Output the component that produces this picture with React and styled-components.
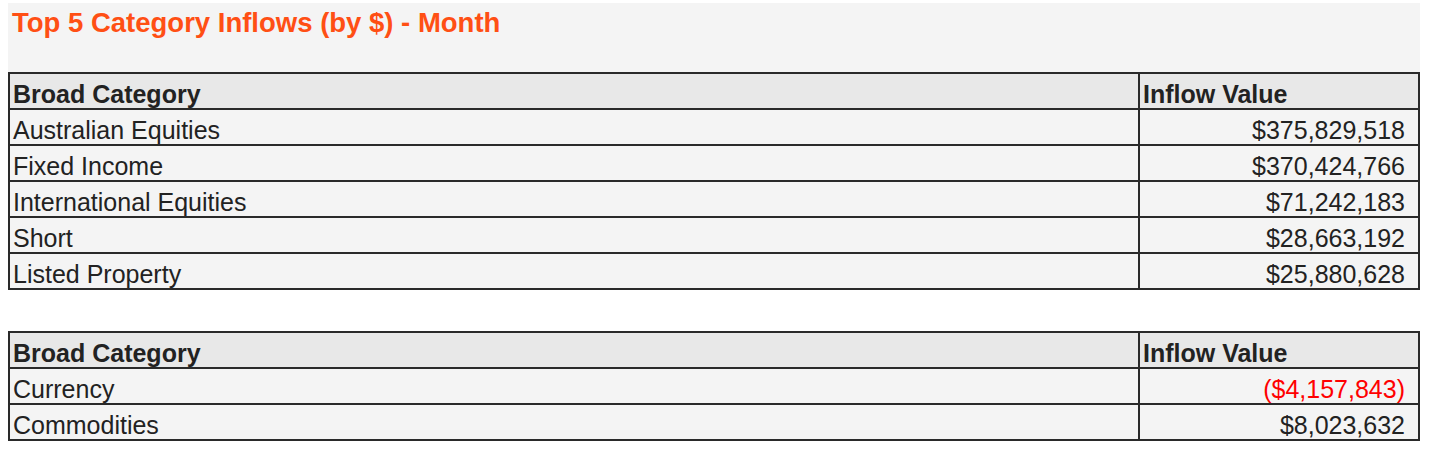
import React from "react";
import styled, { createGlobalStyle } from "styled-components";

const GlobalStyle = createGlobalStyle`
  body {
    margin: 0;
    background: #ffffff;
    font-family: "Liberation Sans", Arial, sans-serif;
  }
`;

const Page = styled.div`
  padding: 3px 26px 0 8px;
  display: flex;
  flex-direction: column;
`;

const TitleBar = styled.div`
  background: #f4f4f4;
  height: 69px;
  padding: 4px 0 0 4px;
  box-sizing: border-box;
`;

const Title = styled.h1`
  margin: 0;
  font-size: 27.5px;
  line-height: 32px;
  font-weight: bold;
  color: #ff4f14;
`;

const Table = styled.div`
  border: 2px solid #2a2a2a;
  background: #f4f4f4;
  margin-top: ${(p) => p.$gap || 0}px;
`;

const Row = styled.div`
  display: grid;
  grid-template-columns: 1128px 1fr;
  height: 34px;
  background: ${(p) => (p.$head ? "#e8e8e8" : "#f4f4f4")};
  & + & {
    border-top: 2px solid #2a2a2a;
  }
`;

const Cell = styled.div`
  font-size: 25px;
  line-height: 28px;
  padding-top: 6px;
  color: ${(p) => (p.$negative ? "#ff0000" : "#222222")};
  font-weight: ${(p) => (p.$head ? "bold" : "normal")};
  text-align: ${(p) => (p.$right ? "right" : "left")};
  padding-left: ${(p) => (p.$right ? "4px" : "3px")};
  padding-right: ${(p) => (p.$right ? "13px" : "0")};
  white-space: nowrap;
  & + & {
    border-left: 2px solid #2a2a2a;
  }
`;

const top5 = [
  ["Australian Equities", "$375,829,518"],
  ["Fixed Income", "$370,424,766"],
  ["International Equities", "$71,242,183"],
  ["Short", "$28,663,192"],
  ["Listed Property", "$25,880,628"],
];

const bottom = [
  ["Currency", "($4,157,843)", true],
  ["Commodities", "$8,023,632"],
];

const InflowTable = ({ rows, gap }) => (
  <Table $gap={gap}>
    <Row $head>
      <Cell $head>Broad Category</Cell>
      <Cell $head>Inflow Value</Cell>
    </Row>
    {rows.map(([name, value, neg]) => (
      <Row key={name}>
        <Cell>{name}</Cell>
        <Cell $right $negative={neg}>
          {value}
        </Cell>
      </Row>
    ))}
  </Table>
);

export default function App() {
  return (
    <>
      <GlobalStyle />
      <Page>
        <TitleBar>
          <Title>Top 5 Category Inflows (by $) - Month</Title>
        </TitleBar>
        <InflowTable rows={top5} />
        <InflowTable rows={bottom} gap={41} />
      </Page>
    </>
  );
}
